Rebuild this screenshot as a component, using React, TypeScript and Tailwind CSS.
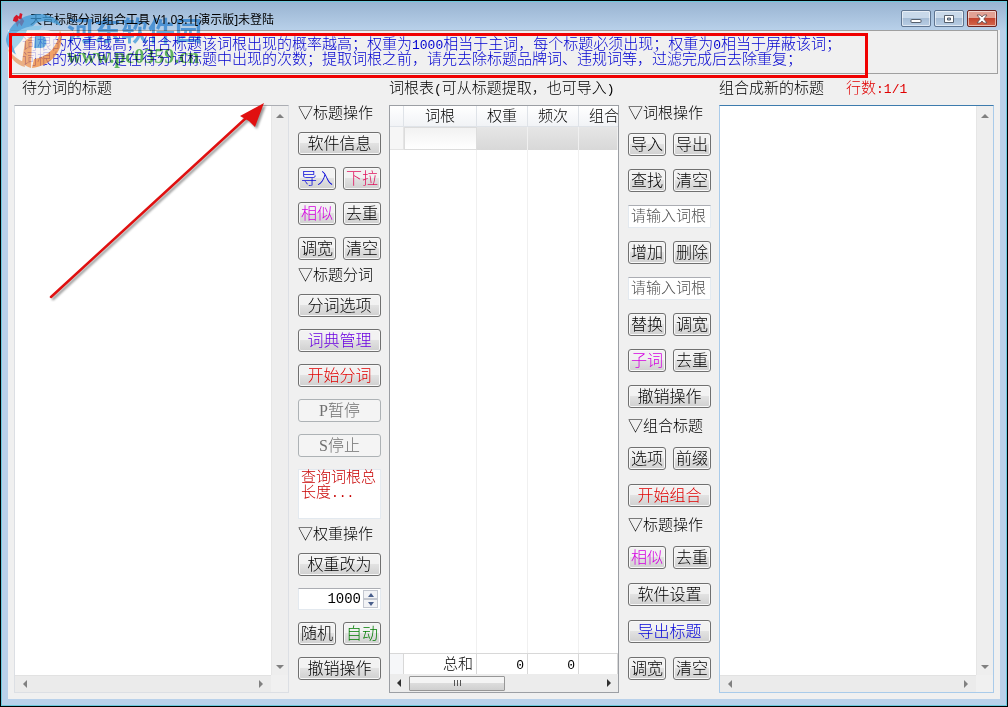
import { useState } from 'react';
import type { ReactNode } from 'react';

const TONES = {
  black: 'text-black',
  blue: 'text-[#0000d8]',
  pink: 'text-[#e0105c]',
  magenta: 'text-[#d400e0]',
  violet: 'text-[#6a00e0]',
  red: 'text-[#e00000]',
  green: 'text-[#007c00]',
};

type Tone = keyof typeof TONES;

function Btn({ children, tone = 'black', disabled = false }: { children: ReactNode; tone?: Tone; disabled?: boolean }) {
  const look = disabled
    ? 'border-[#adb2b5] bg-[#f4f4f4] text-[#707070]'
    : 'border-[#707070] bg-linear-to-b from-[#f2f2f2] from-45% via-[#e2e2e2] via-50% to-[#d0d0d0] shadow-[inset_0_0_0_1px_#f8f8f8] ' + TONES[tone];
  return (
    <button
      type="button"
      disabled={disabled}
      className={'flex h-[23px] w-full items-center justify-center overflow-hidden rounded-[3px] border text-[16px] leading-5 whitespace-nowrap ' + look}
    >
      {children}
    </button>
  );
}

function Latin({ children }: { children: ReactNode }) {
  return <span className="font-[Liberation_Mono,monospace] text-[13px] leading-none font-normal">{children}</span>;
}

function Letter({ children }: { children: ReactNode }) {
  return <span className="font-[Liberation_Serif,serif] font-normal">{children}</span>;
}

function Pair({ children }: { children: ReactNode }) {
  return <div className="grid grid-cols-2 gap-[7px]">{children}</div>;
}

function Heading({ children }: { children: ReactNode }) {
  return <h2 className="flex h-[14px] items-center text-[15px] leading-[14px] whitespace-nowrap">▽{children}</h2>;
}

function Tri({ dir, dark = false }: { dir: 'up' | 'down' | 'left' | 'right'; dark?: boolean }) {
  const d = {
    up: 'M0 6 L4 2 L8 6Z',
    down: 'M0 2 L4 6 L8 2Z',
    left: 'M6 0 L2 4 L6 8Z',
    right: 'M2 0 L6 4 L2 8Z',
  }[dir];
  return (
    <svg viewBox="0 0 8 8" className={dark ? 'size-2 fill-[#303030]' : 'size-2 fill-[#808080]'} aria-hidden="true">
      <path d={d} />
    </svg>
  );
}

function TextPanel({ label, focused = false }: { label: string; focused?: boolean }) {
  const edge = focused ? 'border-[#a9cbea] border-t-[#3d7bad]' : 'border-[#dcdfe4] border-t-[#abadb3]';
  return (
    <div className={'grid flex-1 grid-cols-[1fr_17px] grid-rows-[1fr_17px] border bg-[#f0f0f0] ' + edge}>
      <textarea aria-label={label} className="block size-full resize-none bg-white p-1 text-[15px] outline-none" />
      <div className="flex flex-col items-center justify-between border-l border-[#e6e6e6] bg-[#eeeeee] pt-1.5 pb-1">
        <Tri dir="up" />
        <Tri dir="down" />
      </div>
      <div className="flex items-center justify-between border-t border-[#e2e2e2] bg-[#ebebeb] px-1.5">
        <Tri dir="left" />
        <Tri dir="right" />
      </div>
    </div>
  );
}

function Logo() {
  return (
    <svg viewBox="0 0 58 58" className="size-[58px] opacity-75" aria-hidden="true">
      <path d="M1 28 C5 12 18 3 34 3 C44 3 54 8 56 15 C46 10 38 9 31 12 L24 19 L23 28 L12 44 C5 40 1 34 1 28Z" fill="#3f9bd8" />
      <path d="M5 29 C12 18 24 14 38 15 L33 20 L21 21 L20 30 L9 38Z" fill="#86c8ea" />
      <path d="M9 38 C18 30 20 24 22 19 H40 C49 19 53 25 51 33 C48 42 40 47 30 47 L29 55 C18 54 11 47 9 38Z" fill="#fdf6f0" />
      <path d="M30 25 H37 C43 25 43 37 36 37 H29Z" fill="#4ba0d6" />
      <path d="M55 19 C61 36 48 55 27 57 L29 48 C43 46 53 36 55 19Z" fill="#f0893a" />
      <path d="M20 30 L27 25 L26 57 C22 56 19 54 17 51Z" fill="#ef9350" />
      <path d="M3 38 C5 47 11 54 20 56 L19 51 C13 49 7 44 3 38Z" fill="#e79a62" />
    </svg>
  );
}

function Watermark() {
  return (
    <>
      <div className="pointer-events-none absolute top-[10px] left-[4px]">
        <Logo />
      </div>
      <div className="pointer-events-none absolute top-[14px] left-[66px] mix-blend-multiply" aria-hidden="true">
        <div className="font-[Noto_Sans_CJK_SC,sans-serif] text-[27px] leading-[30px] font-bold text-[#4aa6e6]/80">河东软件园</div>
        <div className="font-[Liberation_Serif,serif] text-[20px] leading-[22px] font-bold text-[#3fb03f]/80">www.pc0359.cn</div>
      </div>
    </>
  );
}

function TitleBar() {
  const base = 'flex h-[17px] w-[30px] items-center justify-center rounded-[2px] border shadow-[inset_0_0_0_1px_rgba(255,255,255,0.55)]';
  const blue = base + ' border-[#5f7591] bg-linear-to-b from-[#c9d9ea] from-45% via-[#a6bdd6] via-50% to-[#b9cee4]';
  return (
    <header className="flex h-[29px] items-center justify-between pr-[3px] pl-1">
      <div className="flex items-center gap-1 pt-2">
        <svg viewBox="0 0 14 16" className="size-[14px]" aria-hidden="true">
          <path d="M1 5 L4 2 L7 4 L8 0 L11 1 L10 5 L13 9 L10 15 L7 11 L5 16 L3 10 L0 9Z" fill="#d5182a" />
          <path d="M6 6 L9 8 L7 10Z" fill="#f3b7bd" />
        </svg>
        <h1 className="font-[Noto_Sans,Noto_Sans_CJK_SC,sans-serif] text-[12px] leading-4 font-normal whitespace-nowrap text-black">
          天音标题分词组合工具 V1.03.1[演示版]未登陆
        </h1>
      </div>
      <div className="flex gap-[3px] pt-1.5">
        <button type="button" aria-label="最小化" className={blue}>
          <svg viewBox="0 0 12 10" className="h-[10px] w-3"><rect x="1" y="5.5" width="10" height="3" rx="0.5" fill="#fff" stroke="#555f6c" /></svg>
        </button>
        <button type="button" aria-label="最大化" className={blue}>
          <svg viewBox="0 0 12 10" className="h-[10px] w-3"><path d="M1.5 1.5 H10.5 V8.5 H1.5Z M4.5 4 V6 H7.5 V4Z" fill="#fff" fillRule="evenodd" stroke="#555f6c" /></svg>
        </button>
        <button type="button" aria-label="关闭" className={base + ' border-[#6b2320] bg-linear-to-b from-[#e2a194] from-45% via-[#c4442f] via-50% to-[#d3664b]'}>
          <svg viewBox="0 0 12 10" className="h-[10px] w-3"><path d="M1 1 H4.2 L6 3 L7.8 1 H11 L7.8 5 L11 9 H7.8 L6 7 L4.2 9 H1 L4.2 5Z" fill="#fff" stroke="#5b4a4e" strokeWidth="0.8" /></svg>
        </button>
      </div>
    </header>
  );
}

function RootTable() {
  const head = 'h-[21px] border-r border-b border-[#dfe3e8] bg-linear-to-b from-white to-[#f1f3f6] p-0 font-light';
  const sel = 'h-[23px] border-r border-[#f0f0f0] bg-linear-to-b from-[#e6e6e6] to-[#d8d8d8] p-0';
  const foot = 'h-[21px] border-t border-r border-[#d8d8d8] bg-white py-0 pr-[3px] pl-0 text-right';
  const line = 'border-r border-[#f0f0f0] p-0';
  return (
    <div className="flex flex-1 flex-col overflow-hidden border border-[#9c9fa4] bg-white">
      <table className="w-full flex-1 table-fixed border-separate border-spacing-0 text-[15px] leading-[18px]">
        <colgroup>
          <col className="w-[14px]" />
          <col className="w-[73px]" />
          <col className="w-[51px]" />
          <col className="w-[51px]" />
          <col />
        </colgroup>
        <thead>
          <tr>
            <th className={head} />
            <th className={head}>词根</th>
            <th className={head}>权重</th>
            <th className={head}>频次</th>
            <th className="h-[21px] overflow-hidden border-b border-[#dfe3e8] bg-linear-to-b from-white to-[#f1f3f6] py-0 pr-0 pl-2.5 text-left font-light whitespace-nowrap">组合</th>
          </tr>
        </thead>
        <tbody>
          <tr>
            <td className="h-[23px] border-r border-b border-[#e4e4e4] bg-[#f6f6f6] p-0" />
            <td className="h-[23px] border border-[#dcdcdc] bg-linear-to-b from-[#f2f2f2] to-white p-0" />
            <td className={sel} />
            <td className={sel} />
            <td className={sel} />
          </tr>
          <tr>
            <td className="p-0" />
            <td className={line} />
            <td className={line} />
            <td className={line} />
            <td className="p-0" />
          </tr>
        </tbody>
        <tfoot>
          <tr>
            <td className="h-[21px] border-t border-r border-[#d8d8d8] bg-[#f6f7f9] p-0" />
            <td className={foot}>总和</td>
            <td className={foot}><Latin>0</Latin></td>
            <td className={foot}><Latin>0</Latin></td>
            <td className={foot} />
          </tr>
        </tfoot>
      </table>
      <div className="flex h-[18px] items-center bg-[#ececec] px-[5px]">
        <Tri dir="left" dark />
        <div className="ml-1.5 flex h-[15px] w-24 items-center justify-center gap-[2px] rounded-[1px] border border-[#979797] bg-linear-to-b from-[#f4f4f4] from-45% via-[#dcdcdc] via-50% to-[#d0d0d0]">
          <span className="h-[6px] w-px bg-[#555]" />
          <span className="h-[6px] w-px bg-[#555]" />
          <span className="h-[6px] w-px bg-[#555]" />
        </div>
        <div className="flex-1" />
        <Tri dir="right" dark />
      </div>
    </div>
  );
}

function WordInput({ label }: { label: string }) {
  return (
    <input
      type="text"
      aria-label={label}
      placeholder="请输入词根"
      className="h-[23px] w-full border border-[#e3e9ef] border-t-[#abadb3] bg-white px-0.5 text-[15px] leading-5 outline-none placeholder:text-[#505050]"
    />
  );
}

function WeightInput() {
  const [weight, setWeight] = useState(1000);
  const step = 'flex h-[9px] w-[15px] items-center justify-center border border-[#c3c7d0] bg-[#f2f3f6]';
  return (
    <div className="flex h-[22px] items-center gap-0.5 border border-[#e3e9ef] border-t-[#abadb3] bg-white pr-0.5">
      <input
        type="text"
        aria-label="权重"
        value={weight}
        onChange={(e) => setWeight(Number(e.target.value) || 0)}
        className="w-0 min-w-0 flex-1 text-right font-[Liberation_Mono,monospace] text-[14px] leading-5 font-normal outline-none"
      />
      <div className="flex flex-col">
        <button type="button" aria-label="增大" className={step} onClick={() => setWeight(weight + 1)}>
          <svg viewBox="0 0 6 4" className="h-1 w-1.5 fill-[#4a5f8c]"><path d="M0 4 L3 0 L6 4Z" /></svg>
        </button>
        <button type="button" aria-label="减小" className={step} onClick={() => setWeight(weight - 1)}>
          <svg viewBox="0 0 6 4" className="h-1 w-1.5 fill-[#4a5f8c]"><path d="M0 0 L3 4 L6 0Z" /></svg>
        </button>
      </div>
    </div>
  );
}

export default function App() {
  return (
    <div className="relative flex min-h-screen flex-col overflow-hidden border border-black bg-[#b9d1ea] bg-linear-to-b from-[#98b3d1] to-[#b9d1ea] to-[30px] font-[Liberation_Serif,Noto_Sans_CJK_SC,sans-serif] font-light text-black shadow-[inset_0_0_0_1px_#6cc9dc]">
      <div className="flex flex-1 flex-col px-[7px] pb-[7px]">
        <TitleBar />
        <div className="flex flex-1 flex-col bg-[#f0f0f0] px-[6px] pb-[6px]">
          <p className="-mx-1 h-[44px] border border-[#a0a0a0] border-l-[#dddddd] py-1.5 pl-[11px] text-[15px] leading-[15px] whitespace-nowrap text-[#0000d0]">
            词根的权重越高，组合标题该词根出现的概率越高；权重为<Latin>1000</Latin>相当于主词，每个标题必须出现；权重为<Latin>0</Latin>相当于屏蔽该词；
            <br />
            词根的频次即是在待分词标题中出现的次数；提取词根之前，请先去除标题品牌词、违规词等，过滤完成后去除重复；
          </p>

          <main className="grid flex-1 grid-cols-[275fr_84px_230fr_84px_275fr] gap-2">
            <section className="flex min-w-0 flex-col">
              <div className="h-[31px] pl-2 text-[15px] leading-7">待分词的标题</div>
              <TextPanel label="待分词的标题" />
            </section>

            <aside className="flex flex-col gap-2 pt-8 pl-px">
              <div className="flex flex-col gap-3">
                <Heading>标题操作</Heading>
                <Btn>软件信息</Btn>
                <Pair>
                  <Btn tone="blue">导入</Btn>
                  <Btn tone="pink">下拉</Btn>
                </Pair>
                <Pair>
                  <Btn tone="magenta">相似</Btn>
                  <Btn>去重</Btn>
                </Pair>
                <Pair>
                  <Btn>调宽</Btn>
                  <Btn>清空</Btn>
                </Pair>
              </div>
              <div className="flex flex-col gap-3">
                <Heading>标题分词</Heading>
                <Btn>分词选项</Btn>
                <Btn tone="violet">词典管理</Btn>
                <Btn tone="red">开始分词</Btn>
                <Btn disabled><Letter>P</Letter>暂停</Btn>
                <Btn disabled><Letter>S</Letter>停止</Btn>
                <div className="h-[50px] border border-[#e3e9ef] bg-white px-0.5 text-[15px] leading-[15px] text-[#c80000]">
                  查询词根总长度<Latin>...</Latin>
                </div>
              </div>
              <div className="flex flex-col gap-3">
                <Heading>权重操作</Heading>
                <Btn>权重改为</Btn>
                <WeightInput />
                <Pair>
                  <Btn>随机</Btn>
                  <Btn tone="green">自动</Btn>
                </Pair>
                <Btn>撤销操作</Btn>
              </div>
            </aside>

            <section className="flex min-w-0 flex-col">
              <div className="h-[31px] text-[15px] leading-7 whitespace-nowrap">
                词根表<Latin>(</Latin>可从标题提取，也可导入<Latin>)</Latin>
              </div>
              <RootTable />
            </section>

            <aside className="flex flex-col gap-[11px] pt-8 pl-px">
              <div className="flex flex-col gap-[13px]">
                <Heading>词根操作</Heading>
                <Pair>
                  <Btn>导入</Btn>
                  <Btn>导出</Btn>
                </Pair>
                <Pair>
                  <Btn>查找</Btn>
                  <Btn>清空</Btn>
                </Pair>
                <WordInput label="增加或删除的词根" />
                <Pair>
                  <Btn>增加</Btn>
                  <Btn>删除</Btn>
                </Pair>
                <WordInput label="替换的词根" />
                <Pair>
                  <Btn>替换</Btn>
                  <Btn>调宽</Btn>
                </Pair>
                <Pair>
                  <Btn tone="magenta">子词</Btn>
                  <Btn>去重</Btn>
                </Pair>
                <Btn>撤销操作</Btn>
              </div>
              <div className="flex flex-col gap-[14px]">
                <Heading>组合标题</Heading>
                <Pair>
                  <Btn>选项</Btn>
                  <Btn>前缀</Btn>
                </Pair>
                <Btn tone="red">开始组合</Btn>
              </div>
              <div className="flex flex-col gap-[14px]">
                <Heading>标题操作</Heading>
                <Pair>
                  <Btn tone="magenta">相似</Btn>
                  <Btn>去重</Btn>
                </Pair>
                <Btn>软件设置</Btn>
                <Btn tone="blue">导出标题</Btn>
                <Pair>
                  <Btn>调宽</Btn>
                  <Btn>清空</Btn>
                </Pair>
              </div>
            </aside>

            <section className="flex min-w-0 flex-col">
              <div className="flex h-[31px] gap-[22px] text-[15px] leading-7 whitespace-nowrap">
                <span>组合成新的标题</span>
                <span className="text-[#e00000]">行数<Latin>:1/1</Latin></span>
              </div>
              <TextPanel label="组合成新的标题" focused />
            </section>
          </main>
        </div>
      </div>

      <Watermark />
      <div className="pointer-events-none absolute top-8 left-2 h-[45px] w-[859px] border-[3px] border-[#f00000]" />
      <svg viewBox="0 0 220 204" className="pointer-events-none absolute top-[98px] left-[46px] h-[204px] w-[220px] drop-shadow-[2px_2px_1px_rgba(0,0,0,0.4)]" aria-hidden="true">
        <path d="M4 198 L199 19" stroke="#e01010" strokeWidth="2.5" strokeLinecap="round" />
        <path d="M217 4 L208 28 L202 22 L193 17Z" fill="#e01010" />
      </svg>
    </div>
  );
}
